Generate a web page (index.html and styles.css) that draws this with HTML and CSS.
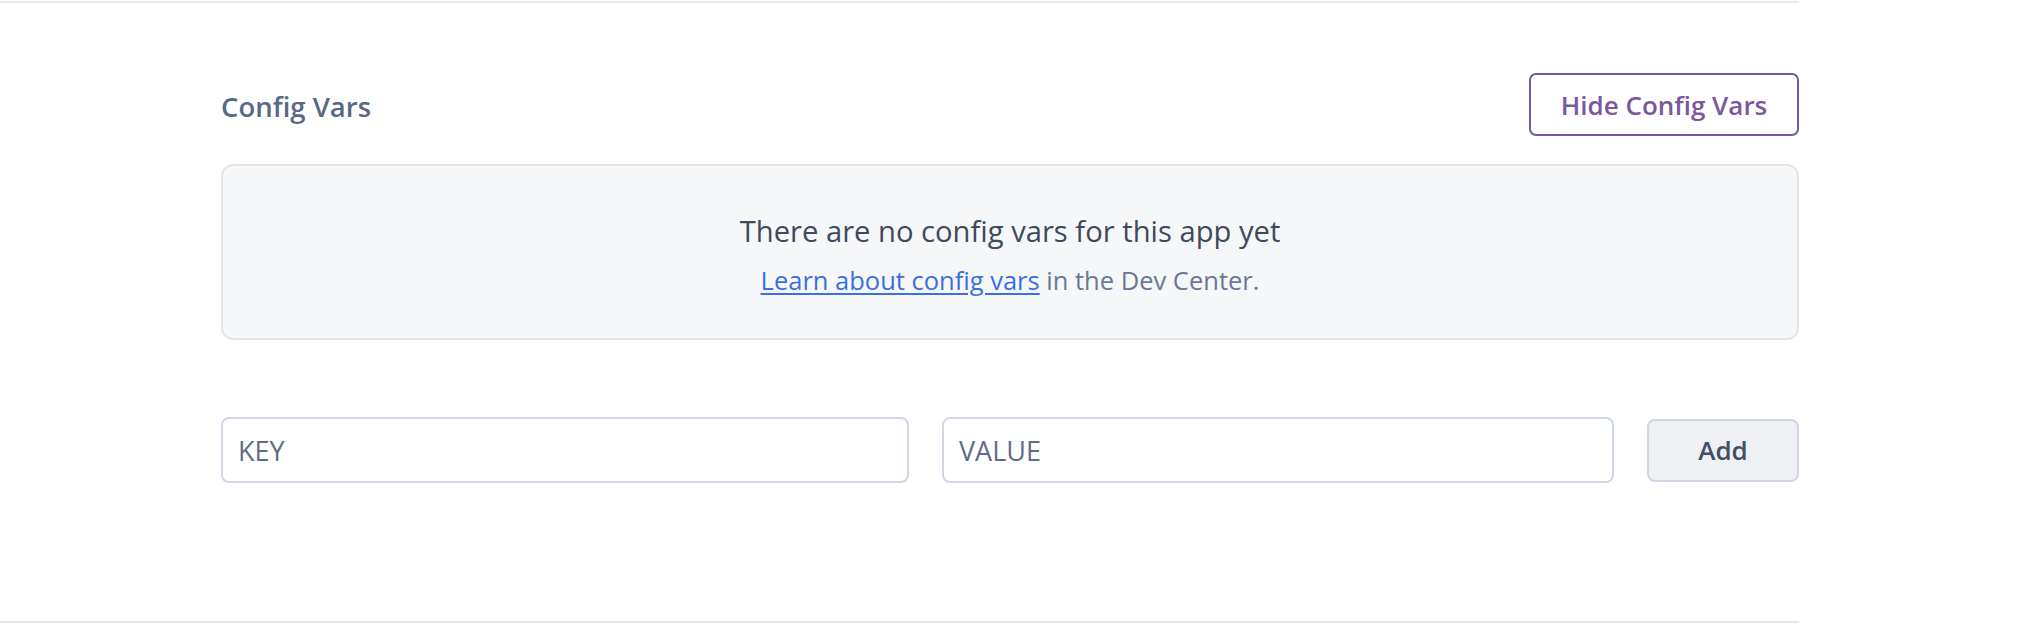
FILE: index.html
```html
<!DOCTYPE html>
<html lang="en">
<head>
<meta charset="utf-8">
<title>Config Vars</title>
<link rel="stylesheet" href="styles.css">
</head>
<body>
<div class="page">
  <section class="config">
    <div class="config-header">
      <h3 class="config-title">Config Vars</h3>
      <button class="btn-outline" type="button">Hide Config Vars</button>
    </div>
    <div class="empty-panel">
      <p class="empty-title">There are no config vars for this app yet</p>
      <p class="empty-sub"><a class="link" href="#">Learn about config vars</a> in the Dev Center.</p>
    </div>
    <form class="add-row">
      <input class="field" type="text" placeholder="KEY">
      <input class="field" type="text" placeholder="VALUE">
      <button class="btn-add" type="button">Add</button>
    </form>
  </section>
</div>
</body>
</html>
```

FILE: styles.css
```css
* {
  box-sizing: border-box;
}

html, body {
  margin: 0;
  padding: 0;
  background: #ffffff;
}

body {
  font-family: "Open Sans", "Noto Sans", sans-serif;
  color: #3f4a5c;
}

.page {
  padding-top: 1px;
}

.config {
  width: 1799px;
  border-top: 2px solid #e6e9ee;
  border-bottom: 2px solid #e6e7f1;
  padding: 70px 0 138px 221px;
}

.config-header {
  display: flex;
  align-items: center;
  justify-content: space-between;
  height: 63px;
}

.config-title {
  margin: 0;
  font-size: 27.5px;
  font-weight: 600;
  color: #596886;
  line-height: 40px;
  padding-top: 5px;
}

.btn-outline {
  width: 270px;
  height: 63px;
  border: 2px solid #79589f;
  border-radius: 7px;
  background: #ffffff;
  color: #79589f;
  font-family: "Open Sans", "Noto Sans", sans-serif;
  font-size: 26px;
  font-weight: 600;
  padding: 0;
}

.empty-panel {
  margin-top: 28px;
  height: 176px;
  border: 2px solid #e3e5e9;
  border-radius: 12px;
  background: #f6f7f9;
  padding-top: 45px;
  text-align: center;
}

.empty-title {
  margin: 0;
  font-size: 29.2px;
  line-height: 40px;
  color: #3f4a5c;
}

.empty-sub {
  margin: 12px 0 0;
  font-size: 25.5px;
  line-height: 34px;
  color: #6a7893;
}

.link {
  color: #3c6fe0;
  text-decoration: underline;
  text-underline-offset: 3px;
}

.add-row {
  margin: 77px 0 0;
  display: grid;
  grid-template-columns: 688px 672px 152px;
  justify-content: space-between;
  align-items: center;
}

.field {
  height: 66px;
  border: 2px solid #cfd6e4;
  border-radius: 8px;
  padding: 0 15px;
  font-family: "Open Sans", "Noto Sans", sans-serif;
  font-size: 27px;
  color: #3f4a5c;
  background: #ffffff;
  outline: none;
}

.field::placeholder {
  color: #5f6c88;
  opacity: 1;
}

.btn-add {
  height: 63px;
  border: 2px solid #cfd6e4;
  border-radius: 8px;
  background: #eef0f4;
  color: #434f63;
  font-family: "Open Sans", "Noto Sans", sans-serif;
  font-size: 26px;
  font-weight: 600;
  padding: 0;
}
```
